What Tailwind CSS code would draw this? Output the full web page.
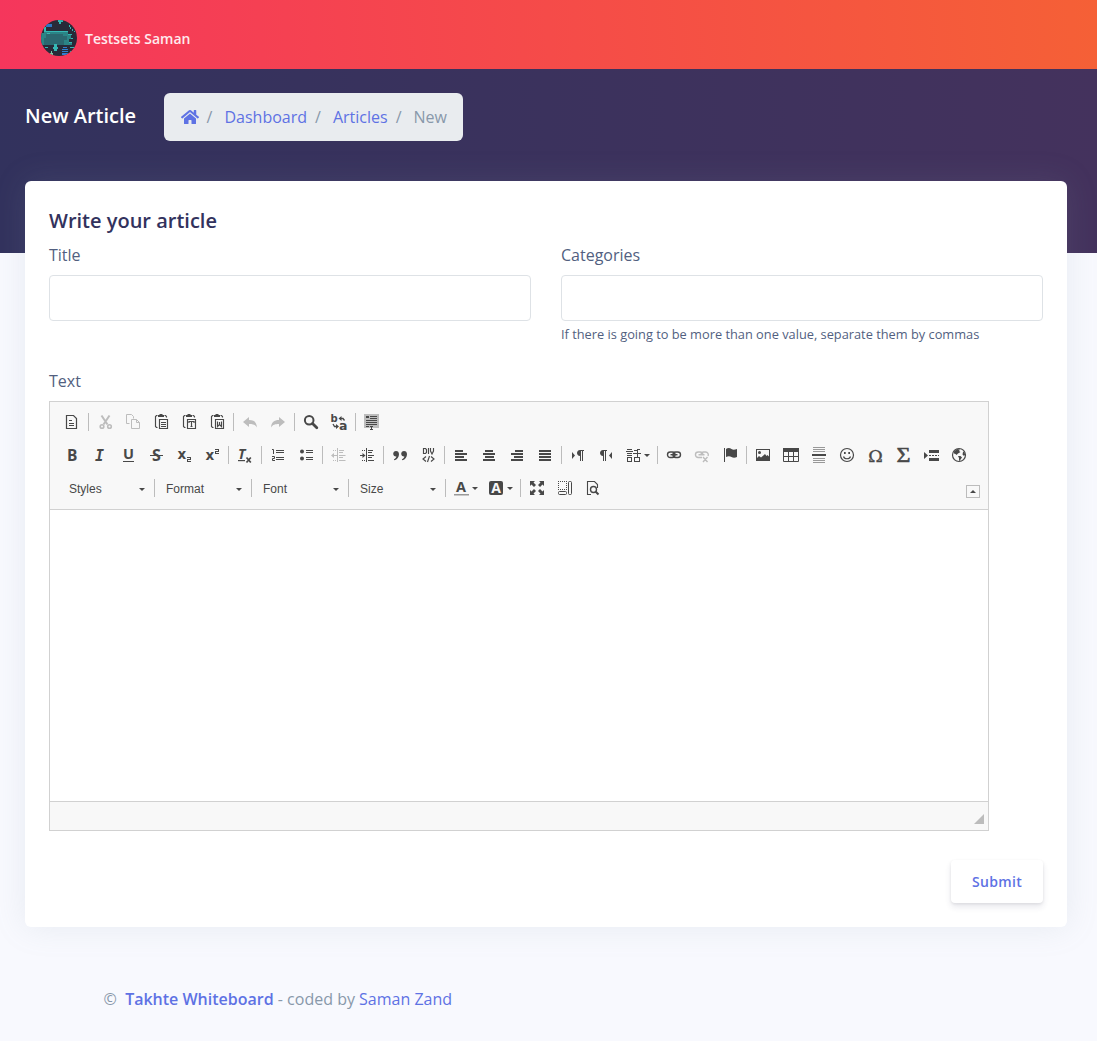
<!DOCTYPE html>
<html lang="en">
<head>
<meta charset="utf-8">
<title>New Article</title>
<script src="https://cdn.jsdelivr.net/npm/@tailwindcss/browser@4"></script>
</head>
<body class="h-[1041px] overflow-hidden bg-[#f8f9fe] font-['Open_Sans',sans-serif] text-base leading-6 text-[#525f7f]">
<header class="flex h-[69px] items-center gap-2 bg-linear-[87deg,#f5365c,#f56036] pt-2 pb-px pl-[41px]">
  <svg class="size-9 rounded-full" viewBox="0 0 36 36" shape-rendering="crispEdges">
    <path fill="#282a38" d="M0 0h36v36H0z"/>
    <path fill="#2b76c4" d="M5 4h6v3H5z"/>
    <path fill="#2b8486" d="M3 7h2v5h22v3h3v4h-2v3h3v3H0V13h3z"/>
    <path fill="#2b6870" d="M5 14h17v2h4v4h-3v5H3v-7h2z"/>
    <path fill="#35b8b4" d="M17 0h5v2h-2v2h-2V2h-1zM5 11h22v1H5zM3 7h2v5H3zM6 13h3v1H6zM13 24h3v3h1v2h-1v2h-3v-2h-1v-2h1zM28 5h1v2h1v2h2v2h2v1h-1v-1h-2V9h-2V7h-1zM27 14h4v1h-4zM30 18h2v1h-2zM28 22h3v1h-3zM4 27h3v1H4zM29 27h5v1h-5zM29 31h3v1h-3z"/>
    <path fill="#2f80d0" d="M22 27h4v1h-4zM21 29h6v1h-6zM21 31h6v1h-6zM21 33h6v2h-6z"/>
    <path fill="#7fc7a6" d="M10 31h1v2h1v2H9v-2h1z"/>
  </svg>
  <span class="mt-0.5 text-sm font-semibold text-white/90">Testsets Saman</span>
</header>

<div class="h-[184px] bg-linear-[87deg,#32325d,#44325d] pt-6 pl-[25px]">
  <div class="flex gap-7">
    <h1 class="pt-2 text-xl leading-[30px] font-semibold text-white">New Article</h1>
    <nav class="flex h-12 w-[299px] items-center rounded-md bg-[#e9ecef] pr-4 pl-[16.5px] whitespace-nowrap text-[#8898aa]">
      <svg class="h-4 w-[18px] shrink-0" viewBox="0 0 576 512" fill="#5e72e4"><path d="M280.4 148.3 96 300.1V464a16 16 0 0 0 16 16l112-.3a16 16 0 0 0 16-16V368a16 16 0 0 1 16-16h64a16 16 0 0 1 16 16v95.600a16 16 0 0 0 16 16L464 480a16 16 0 0 0 16-16V300L295.700 148.300a12.200 12.200 0 0 0-15.300 0zM571.600 251.500 488 182.600V44.100a12 12 0 0 0-12-12h-56a12 12 0 0 0-12 12v72.600L318.500 43a48 48 0 0 0-61 0L4.300 251.500a12 12 0 0 0-1.600 16.900l25.500 31a12 12 0 0 0 16.900 1.600L280.400 107.200a12.200 12.200 0 0 1 15.300 0l235.200 193.700a12 12 0 0 0 16.900-1.600l25.500-31a12 12 0 0 0-1.700-16.800z"/></svg>
      <span class="pr-3 pl-2">/</span><a class="text-[#5e72e4]">Dashboard</a>
      <span class="pr-3 pl-2">/</span><a class="text-[#5e72e4]">Articles</a>
      <span class="pr-3 pl-2">/</span><span>New</span>
    </nav>
  </div>
</div>

<main class="relative -mt-[72px] mr-[30px] ml-[25px] h-[746px] rounded-md bg-white px-6 pt-[25px] shadow-[0_0_32px_0_rgba(136,152,170,0.15)]">
  <h2 class="text-xl leading-[30px] font-semibold text-[#32325d]">Write your article</h2>
  <div class="mt-[7px] grid h-[126px] grid-cols-2 gap-x-[30px]">
    <label class="block"><span class="block">Title</span><input class="mt-2 block h-[46px] w-full rounded border border-[#dee2e6] bg-white"></label>
    <label class="block"><span class="block">Categories</span><input class="mt-2 block h-[46px] w-full rounded border border-[#dee2e6] bg-white"><small class="mt-1 block text-[12.8px] leading-[19px]">If there is going to be more than one value, separate them by commas</small></label>
  </div>
  <div class="mb-2">Text</div>

  <section class="flex h-[430px] w-[940px] flex-col border border-[#d1d1d1] bg-white text-[#484848]">
    <div class="flex h-[108px] flex-col gap-[9px] border-b border-[#d1d1d1] bg-[#f8f8f8] pt-2 pl-2 text-[#484848]">
      <!-- document, clipboard, history, search -->
      <div class="flex h-6 items-center [&>i]:mx-0.5 [&>i]:h-[18px] [&>i]:w-px [&>i]:bg-[#bcbcbc] [&>svg]:h-6 [&>svg]:w-7 [&>svg]:shrink-0 [&>svg]:px-1.5 [&>svg]:py-1">
        <svg viewBox="0 0 16 16" fill="none" stroke="currentColor"><path d="M2.500 1.500h7l3 3v10h-10zM5 6.500h3M5 9.500h5M5 11.500h5" stroke-width="1.200"/></svg>
        <i></i>
        <svg viewBox="0 0 16 16" fill="none" stroke="#bdbdbd"><path d="m4.500 1.500 6 9M12.500 1.500l-6 9" stroke-width="2"/><circle cx="5" cy="12.500" r="1.800" stroke-width="1.600"/><circle cx="12.500" cy="12.500" r="1.800" stroke-width="1.600"/></svg>
        <svg viewBox="0 0 16 16" fill="none" stroke="#bdbdbd"><path d="M4.500 9.500h-3v-9h5l2 2v2M6.500 5.500h5l3 3v6h-8zM11.500 5.500v3h3"/></svg>
        <svg viewBox="0 0 16 16" fill="none" stroke="currentColor"><path d="M4.500 1.500h-1l-1 1v10l1 1h1M11.500 1.500h1l1 1v1M6.500 5.500h8v9h-8zM8 8.500h5M8 10.500h5M8 12.500h5" stroke-width="1.150"/><path d="M5 1h1.500V0h3v1H11v2H5z" fill="currentColor" stroke="none"/></svg>
        <svg viewBox="0 0 16 16" fill="none" stroke="currentColor"><path d="M4.500 1.500h-1l-1 1v10l1 1h1M11.500 1.500h1l1 1v1M6.500 5.500h8v9h-8zM8 9V7.500h5V9M10.500 8v5M9.500 12.500h2" stroke-width="1.150"/><path d="M5 1h1.500V0h3v1H11v2H5z" fill="currentColor" stroke="none"/></svg>
        <svg viewBox="0 0 16 16" fill="none" stroke="currentColor"><path d="M4.500 1.500h-1l-1 1v10l1 1h1M11.500 1.500h1l1 1v1M6.500 5.500h8v9h-8zM8.500 7.500v5l2-2 2 2v-5M10.500 8v3" stroke-width="1.150"/><path d="M5 1h1.500V0h3v1H11v2H5z" fill="currentColor" stroke="none"/></svg>
        <i></i>
        <svg viewBox="0 0 16 16" fill="#bdbdbd"><path d="M1 8 7 3v3c5 0 7.500 2 8 7.500C13 10.500 11 10 7 10v3z"/></svg>
        <svg viewBox="0 0 16 16" fill="#bdbdbd"><path d="M15 8 9 3v3c-5 0-7.500 2-8 7.500C3 10.500 5 10 9 10v3z"/></svg>
        <i></i>
        <svg viewBox="0 0 16 16" fill="none" stroke="currentColor"><circle cx="6.200" cy="6.200" r="4.300" stroke-width="2"/><path d="m9.500 9.500 4.300 4.300" stroke-width="2.800" stroke-linecap="round"/></svg>
        <svg class="overflow-visible" viewBox="0 0 16 16" fill="none" stroke="currentColor"><text x="-.5" y="8" font-family="DejaVu Sans" font-weight="700" font-size="10" fill="currentColor" stroke="none">b</text><text x="8" y="15.800" font-family="DejaVu Sans" font-weight="700" font-size="12.500" fill="currentColor" stroke="none">a</text><path d="M9 4.500h3l1.500 2M2 10l1.500 2.500h2" stroke-width="1.300"/><path d="M7.500 4.500 10.500 2v5zM8 12.500 5 10v5z" fill="currentColor" stroke="none"/></svg>
        <i></i>
        <svg viewBox="0 0 16 16" fill="none" stroke="currentColor" shape-rendering="crispEdges"><path d="M0 0h15v14H0z" fill="#bdbdbd" stroke="none"/><path d="M2 2.500h3M2 3.500h3M6 2.500h7M6 4.500h7M2 6.500h11M2 8.500h11M2 10.500h11M2 12.500h3M6 12.500h3M6 15.500h3M7.500 12v3"/></svg>
      </div>
      <!-- inline styles, lists, alignment, links, inserts -->
      <div class="flex h-6 items-center [&>i]:mx-0.5 [&>i]:h-[18px] [&>i]:w-px [&>i]:shrink-0 [&>i]:bg-[#bcbcbc] [&>svg]:h-6 [&>svg]:w-7 [&>svg]:shrink-0 [&>svg]:overflow-visible [&>svg]:px-1.5 [&>svg]:py-1">
        <svg viewBox="0 0 16 16" fill="currentColor"><text x="3" y="13.500" font-family="Open Sans" font-weight="700" font-size="15.500">B</text></svg>
        <svg viewBox="0 0 16 16" fill="currentColor"><text x="3" y="13.500" font-family="DejaVu Sans Mono" font-weight="700" font-style="italic" font-size="15">I</text></svg>
        <svg viewBox="0 0 16 16" fill="currentColor"><text x="3" y="12" font-family="Open Sans" font-weight="700" font-size="14.500">U</text><path d="M3 14h11v1H3z"/></svg>
        <svg viewBox="0 0 16 16" fill="currentColor"><text x="4" y="13.500" font-family="Open Sans" font-weight="700" font-size="16">S</text><path d="M2 8h13v1H2z"/></svg>
        <svg viewBox="0 0 16 16" fill="currentColor"><text x="1.500" y="12" font-family="DejaVu Sans" font-weight="700" font-size="13.500">x</text><path d="M11 10h4v3h-3v1h3v1h-4v-3h3v-1h-3z"/></svg>
        <svg viewBox="0 0 16 16" fill="currentColor"><text x="1.500" y="13" font-family="DejaVu Sans" font-weight="700" font-size="13.500">x</text><path d="M11 2h4v3h-3v1h3v1h-4V4h3V3h-3z"/></svg>
        <i></i>
        <svg viewBox="0 0 16 16" fill="currentColor"><text x="1" y="11.500" font-family="Open Sans" font-weight="700" font-style="italic" font-size="14">T</text><path d="M1 13h7v1.200H1z"/><path d="m9.500 10.500 4.300 5m0-5-4.300 5" stroke="currentColor" stroke-width="1.700"/></svg>
        <i></i>
        <svg viewBox="0 0 16 16" fill="none" stroke="currentColor"><path d="M6 3.500h8M6 5.500h8M6 10.500h8M6 12.500h8M2 2.500h1.500V7M2 9.500h2.500v2h-2v2h2.500"/></svg>
        <svg viewBox="0 0 16 16" fill="none" stroke="currentColor"><path d="M8 3.500h7M8 5.500h7M8 10.500h7M8 12.500h7"/><path d="M4 2.500a2 2 0 1 1 0 4 2 2 0 0 1 0-4zM4 9.500a2 2 0 1 1 0 4 2 2 0 0 1 0-4z" fill="currentColor" stroke="none"/></svg>
        <i></i>
        <svg viewBox="0 0 16 16" fill="none" stroke="#bdbdbd"><path d="M6.500 1v14M8 3.500h5M8 5.500h4M8 8.500h6.500M8 10.500h4M8 13.500h6.500M2 8.500h4M2 3.500h1M4 3.500h1M2 13.500h1M4 13.500h1"/><path d="M0 8.500 3 6v5z" fill="#bdbdbd" stroke="none"/></svg>
        <svg viewBox="0 0 16 16" fill="none" stroke="currentColor"><path d="M7.500 1v14M9 3.500h5M9 5.500h4M9 8.500h6M9 10.500h4M9 13.500h6M1 8.500h3M3 3.500h1M5 3.500h1M3 13.500h1M5 13.500h1"/><path d="M6.500 8.500 3.500 6v5z" fill="currentColor" stroke="none"/></svg>
        <i></i>
        <svg viewBox="0 0 16 16" fill="currentColor"><path d="M4 4c1.900 0 3 1.200 3 3.300C7 10 5.200 12.600 2.400 13.300l-.5-1C3.400 11.700 4.300 10.700 4.400 9.500 2.500 9.700 1.200 8.400 1.200 6.800 1.200 5.200 2.400 4 4 4zM12 4c1.900 0 3 1.200 3 3.300 0 2.700-1.800 5.300-4.600 6l-.5-1c1.500-.6 2.400-1.600 2.500-2.800-1.900.2-3.200-1.100-3.200-2.700C9.200 5.200 10.400 4 12 4z"/></svg>
        <svg viewBox="0 0 16 16" fill="none" stroke="currentColor"><path d="M3.500 1.500v5h2l1-1v-3l-1-1zM8.500 1v6M10.500 1v3l1.500 3 1.500-3V1M6 9.500 3 12l3 2.500M11 9.500l3 2.500-3 2.500M9.500 9l-2 6" stroke-width="1.150"/></svg>
        <i></i>
        <svg viewBox="0 0 16 16" fill="currentColor"><path d="M2 3h8v2H2zM2 6h12v2H2zM2 9h9v2H2zM2 12h12v2H2z"/></svg>
        <svg viewBox="0 0 16 16" fill="currentColor"><path d="M4 3h8v2H4zM2 6h12v2H2zM4 9h9v2H4zM2 12h12v2H2z"/></svg>
        <svg viewBox="0 0 16 16" fill="currentColor"><path d="M6 3h8v2H6zM2 6h12v2H2zM5 9h9v2H5zM2 12h12v2H2z"/></svg>
        <svg viewBox="0 0 16 16" fill="currentColor"><path d="M2 3h12v2H2zM2 6h12v2H2zM2 9h12v2H2zM2 12h12v2H2z"/></svg>
        <i></i>
        <svg viewBox="0 0 16 16" fill="currentColor"><path d="m2 5 3 3.500L2 12zM10 3h4v1h-1v10h-1V4h-1v10h-1V9C8 9 7 7.500 7 6s1-3 3-3z"/></svg>
        <svg viewBox="0 0 16 16" fill="currentColor"><path d="m14 5-3 3.500 3 3.500zM5 3h4v1H8v10H7V4H6v10H5V9C3 9 2 7.500 2 6s1-3 3-3z"/></svg>
        <span class="flex w-[35px] items-center"><svg class="h-4 w-[22px] shrink-0 pl-1.5" viewBox="0 0 16 16" fill="none" stroke="currentColor" shape-rendering="crispEdges"><path d="M1 2.500h5M0 4.500h7M1 6.500h5M1 8.500h5M1.500 10v4.500h4V10.500h-4M8 3.500h3M11 2.500h3M7 6.500h8M11.500 3v7M8.500 14.500v-4h5v4z"/></svg><b class="ml-[2px] border-x-3 border-t-3 border-x-transparent border-t-[#484848]"></b></span>
        <i></i>
        <svg viewBox="0 0 16 16" fill="none" stroke="currentColor" stroke-width="1.400"><rect x="1.500" y="5" width="7.500" height="5.500" rx="2.700"/><rect x="7" y="5" width="7.500" height="5.500" rx="2.700"/><path d="M4.500 7.700h7"/></svg>
        <svg viewBox="0 0 16 16" fill="none" stroke="#bdbdbd" stroke-width="1.400"><path d="M8 10.500H4.200a2.700 2.700 0 0 1 0-5.500h2a2.700 2.700 0 0 1 2.600 2.500M4.500 7.700h6M7 7c.5-1.500 1.500-2 2.500-2h2a2.700 2.700 0 0 1 2.500 4M9 10l4.500 5M13.500 10 9 15"/></svg>
        <svg viewBox="0 0 16 16" fill="currentColor"><path d="M2 1h1v14H2zM4 2c2-1.500 4-1 5.500 0s3 .8 5.500 0v8c-2 1-4 1-5.500 0S6 9 4 10z"/></svg>
        <i></i>
        <svg viewBox="0 0 16 16" fill="currentColor"><path fill-rule="evenodd" d="M1 2h14v12H1zM2 3v10h12V3z"/><circle cx="4.500" cy="5.500" r="1.500"/><path d="M2 13v-2l2-2 2 1.500L10 7l1.500 2 1-1L14 9.500V13z"/></svg>
        <svg viewBox="0 0 16 16" fill="none" stroke="currentColor"><path d="M.5 1.500h15v13H.5zM0 9.500h16M5.500 4v10M10.500 4v10"/><path d="M0 1h16v4H0z" fill="currentColor" stroke="none"/></svg>
        <svg viewBox="0 0 16 16"><path d="M2 .5h12M2 2.500h12M2 4.500h12M2 11.500h12M2 13.500h12M2 15.500h12" stroke="#999"/><path d="M1 7h14v2H1z" fill="currentColor"/></svg>
        <svg viewBox="0 0 16 16" fill="none" stroke="currentColor" stroke-width="1.200"><circle cx="8" cy="8" r="6.500"/><path d="M4.500 9.500c1 3 6 3 7 0"/><path d="M5 5h1.700v2H5zM9.300 5H11v2H9.300z" fill="currentColor" stroke="none"/></svg>
        <svg viewBox="0 0 16 16" fill="currentColor" stroke="currentColor" stroke-width=".4"><text x="8.500" y="14.500" text-anchor="middle" font-family="DejaVu Serif" font-size="17.500" textLength="14.500" lengthAdjust="spacingAndGlyphs">Ω</text></svg>
        <svg viewBox="0 0 16 16" fill="currentColor" stroke="currentColor" stroke-width=".5"><text x="8.500" y="14.500" text-anchor="middle" font-family="Liberation Serif" font-size="20" textLength="14" lengthAdjust="spacingAndGlyphs">Σ</text></svg>
        <svg viewBox="0 0 16 16" fill="currentColor"><path d="m1 5 4 3.500L1 12zM6 3h10v3H6zM6 11h10v3H6zM6 8h2v1H6zM9 8h2v1H9zM12 8h2v1h-2zM15 8h1v1h-1z"/></svg>
        <svg viewBox="0 0 16 16" fill="currentColor"><circle cx="8" cy="8" r="6.500" fill="none" stroke="currentColor" stroke-width="1.200"/><path d="M3 4.500 6 2l3 .5L8 4l1.500 1L7 6.500 5.500 8 4.500 7 3 6.500zM7 9h2.500l1.500 1.500-1.500 2L9 14l-1-.5V11zM12 5l1-.5 1.200 3L13 9l-1.500-1.500z"/></svg>
      </div>
      <!-- style selectors, colours, view tools -->
      <div class="flex h-6 items-center [&>i]:mx-0.5 [&>i]:h-[18px] [&>i]:w-px [&>i]:shrink-0 [&>i]:bg-[#bcbcbc] [&>svg]:h-6 [&>svg]:w-7 [&>svg]:shrink-0 [&>svg]:px-1.5 [&>svg]:py-1">
        <div class="ml-[2px] flex w-[92px] items-center justify-between pt-0.5 pr-[7px] pl-[9px] font-['Liberation_Sans',Arial,sans-serif] text-xs">Styles<b class="border-x-3 border-t-3 border-x-transparent border-t-[#484848]"></b></div>
        <i></i>
        <div class="flex w-[92px] items-center justify-between pt-0.5 pr-[7px] pl-[9px] font-['Liberation_Sans',Arial,sans-serif] text-xs">Format<b class="border-x-3 border-t-3 border-x-transparent border-t-[#484848]"></b></div>
        <i></i>
        <div class="flex w-[92px] items-center justify-between pt-0.5 pr-[7px] pl-[9px] font-['Liberation_Sans',Arial,sans-serif] text-xs">Font<b class="border-x-3 border-t-3 border-x-transparent border-t-[#484848]"></b></div>
        <i></i>
        <div class="flex w-[92px] items-center justify-between pt-0.5 pr-[7px] pl-[9px] font-['Liberation_Sans',Arial,sans-serif] text-xs">Size<b class="border-x-3 border-t-3 border-x-transparent border-t-[#484848]"></b></div>
        <i></i>
        <span class="flex w-[35px] items-center"><svg class="h-4 w-[22px] shrink-0 overflow-visible pl-1.5" viewBox="0 0 16 16" fill="currentColor"><text x="2" y="12" font-family="Open Sans" font-weight="700" font-size="14.500">A</text><path d="M0 14h15v1.500H0z" fill="#999"/></svg><b class="ml-[2px] border-x-3 border-t-3 border-x-transparent border-t-[#484848]"></b></span>
        <span class="flex w-[35px] items-center"><svg class="h-4 w-[22px] shrink-0 overflow-visible pl-1.5" viewBox="0 0 16 16" fill="currentColor"><rect y="1" width="14" height="14" rx="2"/><text x="2.200" y="13" font-family="Open Sans" font-weight="700" font-size="14" fill="#f8f8f8">A</text></svg><b class="ml-[2px] border-x-3 border-t-3 border-x-transparent border-t-[#484848]"></b></span>
        <i></i>
        <svg viewBox="0 0 16 16" fill="currentColor"><path d="M1 1h5L4.500 2.500l2.500 2.500-2 2-2.500-2.500L1 6zM15 1v5l-1.500-1.500L11 7 9 5l2.500-2.500L10 1zM1 15v-5l1.500 1.500L5 9l2 2-2.500 2.500L6 15zM15 15h-5l1.500-1.500L9 11l2-2 2.500 2.500L15 10z"/></svg>
        <svg viewBox="0 0 16 16" fill="none" stroke="currentColor"><path d="M1 1.500h9M1 9.500h9M1.500 1v9M9.500 1v9" stroke-dasharray="1 1"/><rect x="1.500" y="11.500" width="8" height="3" rx="1"/><rect x="11.500" y="1.500" width="3" height="13" rx="1"/></svg>
        <svg viewBox="0 0 16 16" fill="none" stroke="currentColor"><path d="M6 14.500H2.500v-13h7l3 3V8" stroke-width="1.100"/><circle cx="8.500" cy="9.500" r="3" stroke-width="1.400"/><path d="m10.500 11.500 3 3" stroke-width="2"/></svg>
        <button class="mt-[7px] mr-2 ml-auto flex h-[13px] w-[14px] items-center justify-center border border-[#bcbcbc]"><b class="border-x-3 border-b-3 border-x-transparent border-b-[#484848]"></b></button>
      </div>
    </div>
    <div class="flex-1"></div>
    <div class="flex h-[29px] items-end justify-end border-t border-[#d1d1d1] bg-[#f8f8f8] pr-1 pb-1.5"><svg class="size-2.5" viewBox="0 0 10 10"><path d="M10 0v10H0z" fill="#bcbcbc"/></svg></div>
  </section>
  <div class="mt-[29px] flex justify-end"><button class="h-[43px] w-[92px] rounded bg-white text-sm font-semibold tracking-[0.35px] text-[#5e72e4] shadow-[0_4px_6px_rgba(50,50,93,0.11),0_1px_3px_rgba(0,0,0,0.08)]">Submit</button></div>
</main>

<footer class="mt-[60px] ml-[103.5px] text-[#8898aa]">©&nbsp; <a class="font-semibold text-[#5e72e4]">Takhte Whiteboard</a> - coded by <a class="text-[#5e72e4]">Saman Zand</a></footer>
</body>
</html>
